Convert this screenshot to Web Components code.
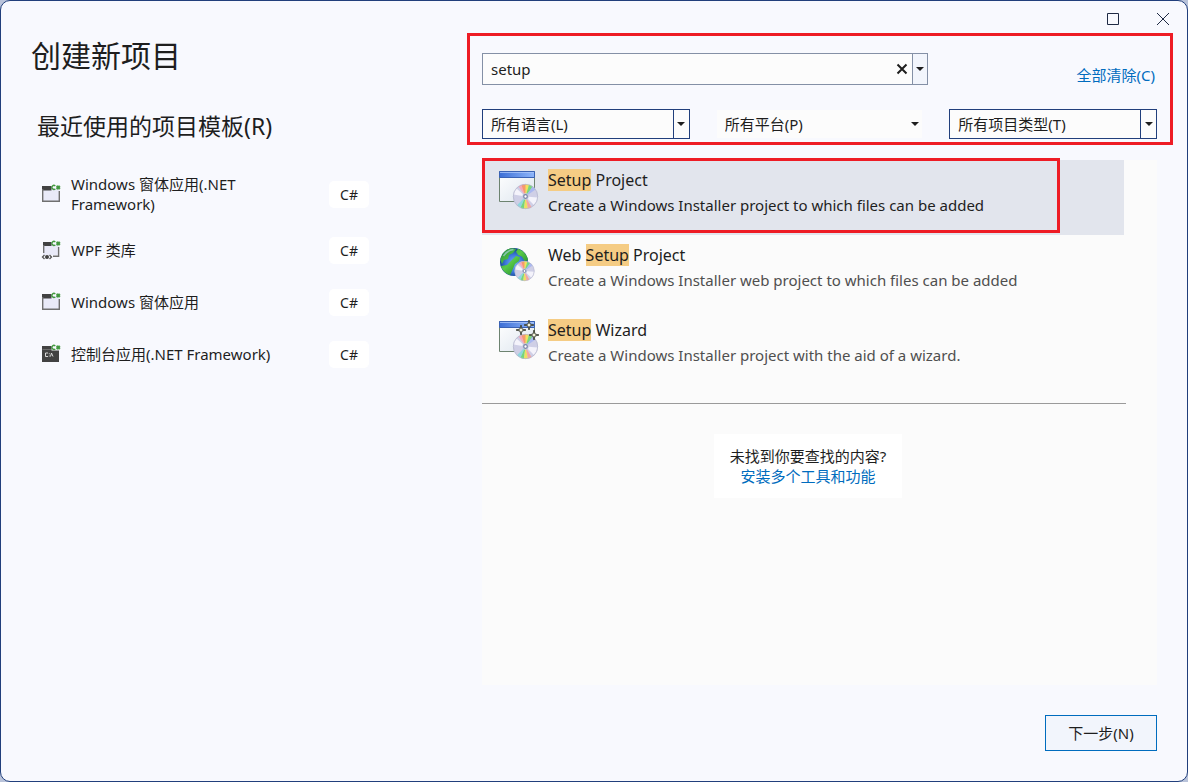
<!DOCTYPE html>
<html lang="zh-CN">
<head>
<meta charset="utf-8">
<meta name="viewport" content="width=device-width, initial-scale=1">
<title>创建新项目</title>
<style>
  html { height: 100%; background: #b9c3da; }
  body {
    margin: 0; min-height: 100%; display: flex;
    font: 15px/20px "Noto Sans", "Noto Sans CJK SC", sans-serif;
    color: #1e1e1e;
    --accent: #006cbe; --navy: #213f7c; --field: #fcfcfc; --callout: #ee1c25;
  }
</style>
</head>
<body>
<project-dialog></project-dialog>

<template id="t-dialog">
  <style>
    :host {
      flex: 1; box-sizing: border-box; min-height: 100vh; display: grid;
      grid-template-columns: minmax(380px, 466px) minmax(0, 1fr);
      background: #f8f9fe; border: 1px solid var(--navy); border-radius: 10px; overflow: hidden;
    }
    aside { padding: 33px 0 30px 30px; }
    h1, h2 { margin: 0; font-weight: 400; }
    h1 { font-size: 30px; line-height: 44px; }
    h2 { font-size: 23px; line-height: 32px; padding: 32px 0 32px 6px; }
    .recent { display: grid; gap: 20px; width: 328px; padding-left: 10px; }
    main { display: flex; flex-direction: column; padding: 0 14px 30px 0; }
    title-buttons { margin-right: -15px; }
    search-panel { margin-bottom: 15px; }
    .results { flex: 1; margin: 0 16px 0 15px; background: #fbfbfb; padding-right: 33px; }
    hr { border: 0; border-top: 1px solid #9a9a9a; margin: 18px -2px 30px 0; }
    .more {
      width: 188px; box-sizing: border-box; margin: 0 auto; padding: 12px 0; text-align: center;
      background: #fff; position: relative; left: 5px;
    }
    p { margin: 0; }
    a { color: var(--accent); text-decoration: none; }
    .next {
      align-self: flex-end; margin: 30px 16px 0 0; width: 112px; height: 36px;
      border: 1px solid var(--accent); background: #f2f5fc; color: inherit; font: inherit; padding: 0;
    }
  </style>
  <aside>
    <h1>创建新项目</h1>
    <h2>最近使用的项目模板(R)</h2>
    <div class="recent">
      <recent-template icon="form" lang-tag="C#">Windows 窗体应用(.NET Framework)</recent-template>
      <recent-template icon="wpf" lang-tag="C#">WPF 类库</recent-template>
      <recent-template icon="form" lang-tag="C#">Windows 窗体应用</recent-template>
      <recent-template icon="console" lang-tag="C#">控制台应用(.NET Framework)</recent-template>
    </div>
  </aside>
  <main>
    <title-buttons></title-buttons>
    <search-panel></search-panel>
    <div class="results">
      <template-result icon="setup" selected><mark>Setup</mark> Project<span slot="desc">Create a Windows Installer project to which files can be added</span></template-result>
      <template-result icon="web">Web <mark>Setup</mark> Project<span slot="desc">Create a Windows Installer web project to which files can be added</span></template-result>
      <template-result icon="wizard"><mark>Setup</mark> Wizard<span slot="desc">Create a Windows Installer project with the aid of a wizard.</span></template-result>
      <hr>
      <div class="more"><p>未找到你要查找的内容?</p><p><a href="#install">安装多个工具和功能</a></p></div>
    </div>
    <button class="next">下一步(N)</button>
  </main>
</template>

<template id="t-titlebuttons">
  <style>
    :host { display: flex; justify-content: flex-end; height: 28px; padding-top: 4px; }
    button { width: 50px; border: 0; padding: 0; background: none; display: grid; place-items: center; }
    svg { display: block; fill: none; stroke: #1f2a44; }
  </style>
  <button aria-label="最大化"><svg width="14" height="14"><path d="M1.500 1.500h11v11h-11z"/></svg></button>
  <button aria-label="关闭"><svg width="14" height="14"><path d="M1 1l12 12M13 1L1 13"/></svg></button>
</template>

<template id="t-search">
  <style>
    :host { display: block; border: 3px solid var(--callout); padding: 17px 13px 3px 12px; }
    .top { display: flex; justify-content: space-between; align-items: flex-start; margin-bottom: 24px; }
    .box {
      box-sizing: border-box; width: 66%; height: 32px; display: flex;
      border: 1px solid #8490a6; background: var(--field);
    }
    input {
      flex: 1; min-width: 0; border: 0; padding: 0 8px; background: none;
      font: inherit; color: inherit; outline: 0; appearance: none;
    }
    button { border: 0; padding: 0; background: none; display: grid; place-items: center; }
    .clear { width: 20px; }
    .drop { width: 15px; border-left: 1px solid #8490a6; background: #f2f5fc; }
    a { color: var(--accent); text-decoration: none; padding: 12px 2px 0 0; }
    .filters { display: grid; grid-template-columns: repeat(3, minmax(0, 1fr)); gap: 26px; }
  </style>
  <div class="top">
    <div class="box">
      <input type="text" value="setup" aria-label="搜索模板">
      <button class="clear" aria-label="清除"><svg width="12" height="12"><path d="M1.500 1.500l9 9M10.500 1.500l-9 9" stroke="#1e1e1e" stroke-width="2"/></svg></button>
      <button class="drop" aria-label="搜索历史"><svg width="8" height="4"><path d="M0 0h8L4 4z" fill="#1e1e1e"/></svg></button>
    </div>
    <a href="#clear">全部清除(C)</a>
  </div>
  <div class="filters">
    <filter-select label="所有语言(L)"></filter-select>
    <filter-select label="所有平台(P)" plain></filter-select>
    <filter-select label="所有项目类型(T)"></filter-select>
  </div>
</template>

<template id="t-select">
  <style>
    :host { display: grid; grid-template-columns: minmax(0, 1fr) 16px; box-sizing: border-box; height: 30px; border: 1px solid var(--navy); background: var(--field); }
    :host([plain]) { border-color: transparent; background-clip: padding-box; }
    select {
      grid-area: 1 / 1 / 2 / 3; width: 100%; height: 100%; border: 0; margin: 0; padding: 0 18px 0 8px;
      appearance: none; background: none; font: inherit; color: inherit; outline: 0; border-radius: 0;
    }
    i { grid-area: 1 / 2; display: grid; place-items: center; border-left: 1px solid var(--navy); pointer-events: none; }
    :host([plain]) i { border-color: transparent; }
  </style>
  <select><option></option></select>
  <i><svg width="8" height="4"><path d="M0 0h8L4 4z" fill="#1e1e1e"/></svg></i>
</template>

<template id="t-recent">
  <style>
    :host { display: block; }
    button {
      display: grid; grid-template-columns: 20px minmax(0, 1fr) 40px; align-items: center; column-gap: 10px;
      width: 100%; min-height: 32px; border: 0; padding: 0; background: none; font: inherit; color: inherit; text-align: left;
    }
    .name { padding-right: 20px; }
    .tag { height: 27px; line-height: 27px; background: #fff; border-radius: 5px; text-align: center; font-size: 14px; }
    svg { display: block; }
  </style>
  <button><span class="icon"></span><span class="name"><slot></slot></span><span class="tag"></span></button>
</template>

<template id="t-result">
  <style>
    :host { display: block; position: relative; }
    button {
      display: grid; grid-template-columns: 40px minmax(0, 1fr); column-gap: 9px; width: 100%;
      border: 0; padding: 8px 8px 17px 17px; background: none; font: inherit; line-height: 25px; color: inherit; text-align: left;
    }
    :host([selected]) button { background: #e2e5ed; }
    .callout { display: none; }
    :host([selected]) .callout {
      display: block; position: absolute; inset: -2px 10% 2px 0; border: 3px solid var(--callout); pointer-events: none;
    }
    .text, .line { display: block; }
    .title { font-size: 16px; }
    .desc { color: #4f4f4f; }
    :host([selected]) .desc { color: inherit; }
    svg { display: block; margin-top: 2px; }
    ::slotted(mark) { background: #f5cc84; color: inherit; }
  </style>
  <button><span class="icon"></span><span class="text"><span class="line title"><slot></slot></span><span class="line desc"><slot name="desc"></slot></span></span></button>
  <span class="callout"></span>
</template>

<script>
const csBadge = `
  <path d="M14.300 1.900a2 2 0 1 0 0 3" fill="none" stroke="#43993f" stroke-width="1.400"/>
  <rect x="15.500" y="1.800" width="3.400" height="3.400" fill="#43993f"/>
  <path d="M15 2.700h4.500M15 4.300h4.500M16.400 1.200v4.600M18 1.200v4.600" fill="none" stroke="#43993f" stroke-width=".6"/>`;
const smallIcons = {
  form: `
    <path d="M1.500 4h17v13.500h-17z" fill="#e9eaf8"/>
    <path d="M1 2h9.500v4.500H1z" fill="#424242"/>
    <path d="M1.700 5v12.300h16.600V7" fill="none" stroke="#707070" stroke-width="1.400"/>` + csBadge,
  wpf: `
    <path d="M2 4h16v11H2z" fill="#e9eaf8"/>
    <path d="M2 2h8.500v4H2z" fill="#424242"/>
    <path d="M2.700 5v8M17.600 7v9.300H12" fill="none" stroke="#707070" stroke-width="1.400"/>
    <path d="M3.500 15L1.500 17l2 2M8.500 15l2 2-2 2" fill="none" stroke="#555" stroke-width="1.300"/>
    <circle cx="6" cy="17" r="2" fill="#424242"/>` + csBadge,
  console: `
    <path d="M1 2h9.500v4.500h7.500V18H1z" fill="#424242"/>
    <path d="M1.500 5.500h9" stroke="#8a8a8a" stroke-width=".6"/>
    <path d="M7 9H4.500v3.500H7M8.300 9.300v.9M8.300 11.600v.9M9.500 12.500l1-3.500 1.500 3.500" fill="none" stroke="#e8e8e8" stroke-width=".9"/>` + csBadge
};

const defs = `<defs>
  <linearGradient id="bar" x2="1"><stop stop-color="#3d6fd6"/><stop offset="1" stop-color="#8fb6fa"/></linearGradient>
  <linearGradient id="pane" x2="1" y2="1"><stop stop-color="#fff"/><stop offset="1" stop-color="#dde5ee"/></linearGradient>
  <radialGradient id="sea" cx=".5" cy=".55"><stop stop-color="#7db4f7"/><stop offset=".6" stop-color="#3d78dc"/><stop offset="1" stop-color="#174a90"/></radialGradient>
  <linearGradient id="land" x2="1" y2="1"><stop stop-color="#2a8f3a"/><stop offset=".45" stop-color="#58c948"/><stop offset="1" stop-color="#0d7425"/></linearGradient>
</defs>`;
const disc = (x, y, s) => `<g transform="translate(${x} ${y}) scale(${s})">
  <circle r="12.500" fill="#cfcfe6"/>
  <path d="M0 0L-7-10A12.300 12.300 0 0 1-2-12z" fill="#f7a8b8"/>
  <path d="M0 0L-4-11.500A12.300 12.300 0 0 1 1-12.200z" fill="#f59a6c"/>
  <path d="M0 0L0-12.200A12.300 12.300 0 0 1 4-11.600z" fill="#f3e25c"/>
  <path d="M0 0L3.500-11.700A12.300 12.300 0 0 1 7.500-9.700z" fill="#79d77f"/>
  <path d="M0 0L7-10A12.300 12.300 0 0 1 10-7z" fill="#aab8f0"/>
  <path d="M0 0L-12-2A12.300 12.300 0 0 1-9-8z" fill="#f4f3fb"/>
  <path d="M0 0L12 1A12.300 12.300 0 0 1 8.500 8.500z" fill="#f4f3fb"/>
  <path d="M0 0L-5 11.200A12.300 12.300 0 0 1-8.500 8.800z" fill="#8fd8e0"/>
  <path d="M0 0L-1.500 12.200A12.300 12.300 0 0 1-5 11.200z" fill="#74d67c"/>
  <path d="M0 0L2.500 12A12.300 12.300 0 0 1-1.500 12.200z" fill="#eee05e"/>
  <path d="M0 0L6 10.700A12.300 12.300 0 0 1 2.500 12z" fill="#f4a5a0"/>
  <circle r="12.200" fill="none" stroke="#b4b6cc" stroke-width=".7"/>
  <circle r="3.200" fill="#c5cbe2"/><circle r="1.800" fill="#fff" stroke="#7882a5" stroke-width="1.200"/></g>`;
const win = `
  <path d="M.5 1.500h35v30H.5z" fill="url(#pane)" stroke="#6d8370"/>
  <path d="M.5 1.500h35v6H.5z" fill="url(#bar)" stroke="#3a62b5"/>
  <path d="M1 2.500h34" stroke="#a9c5fa" stroke-width=".8"/>`;
const spark = (x, y) => `<path transform="translate(${x} ${y})" d="M0-5L1-1 5 0 1 1 0 5-1 1-5 0-1-1z" fill="#f4f4dc" stroke="#34382d" stroke-width=".9"/>`;
const bigIcons = {
  setup: win + disc(26.5, 26.5, 1),
  web: `
    <circle cx="15" cy="17" r="14" fill="url(#sea)"/>
    <path d="M1.500 15C2 9 7 3.500 13 3.200l4 .8-3 4-4 2-1 4-4 1-2 4zM19 3.700c5 1.500 9 6 10 11l-3 2-3-5-4-2-2-3zM8 20l5-5 4-4 4 1-1 4-4 3-3 7-2 4C7 29 3 25 2 21z" fill="url(#land)"/>
    <path d="M4.500 11q4-6 10-6.500" fill="none" stroke="#b8d8f8" stroke-opacity=".6" stroke-width="1.500"/>` + disc(25.5, 26, .8),
  wizard: win + disc(26.5, 26.5, 1) + spark(30, 5) + spark(22, 10) + spark(35, 15)
};

const define = (name, id, setup) => customElements.define(name, class extends HTMLElement {
  constructor() {
    super();
    this.attachShadow({ mode: "open" }).append(document.getElementById(id).content.cloneNode(true));
  }
  connectedCallback() { if (setup) setup(this, s => this.shadowRoot.querySelector(s)); }
});

define("title-buttons", "t-titlebuttons");
define("filter-select", "t-select", (el, $) => {
  $("option").textContent = el.getAttribute("label");
  $("select").setAttribute("aria-label", el.getAttribute("label"));
});
define("search-panel", "t-search");
define("recent-template", "t-recent", (el, $) => {
  $(".icon").innerHTML = `<svg width="20" height="20" viewBox="0 0 20 20">${smallIcons[el.getAttribute("icon")]}</svg>`;
  $(".tag").textContent = el.getAttribute("lang-tag");
});
define("template-result", "t-result", (el, $) => {
  $(".icon").innerHTML = `<svg width="40" height="40" viewBox="0 0 40 40">${defs}${bigIcons[el.getAttribute("icon")]}</svg>`;
});
define("project-dialog", "t-dialog");
</script>
</body>
</html>
